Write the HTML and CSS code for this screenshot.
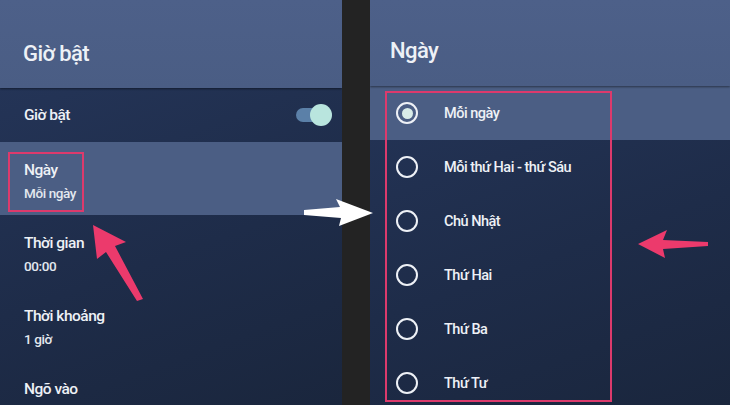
FILE: index.html
```html
<!DOCTYPE html>
<html lang="vi">
<head>
<meta charset="utf-8">
<title>Giờ bật</title>
<link rel="stylesheet" href="styles.css">
</head>
<body>
<div class="screen">
  <section class="panel left">
    <header class="head"><h1 class="head-title">Giờ bật</h1></header>
    <div class="list">
      <div class="row row-single">
        <span class="row-title">Giờ bật</span>
        <span class="toggle"><span class="track"></span><span class="thumb"></span></span>
      </div>
      <div class="row row-double selected">
        <span class="row-title">Ngày</span>
        <span class="row-sub">Mỗi ngày</span>
        <span class="mark mark-left"></span>
      </div>
      <div class="row row-double">
        <span class="row-title">Thời gian</span>
        <span class="row-sub">00:00</span>
      </div>
      <div class="row row-double">
        <span class="row-title">Thời khoảng</span>
        <span class="row-sub">1 giờ</span>
      </div>
      <div class="row row-double">
        <span class="row-title">Ngõ vào</span>
        <span class="row-sub">&nbsp;</span>
      </div>
    </div>
  </section>
  <div class="divider"></div>
  <section class="panel right">
    <header class="head head-right"><h1 class="head-title">Ngày</h1></header>
    <div class="list">
      <div class="opt selected"><span class="radio on"></span><span class="opt-label">Mỗi ngày</span></div>
      <div class="opt"><span class="radio"></span><span class="opt-label">Mỗi thứ Hai - thứ Sáu</span></div>
      <div class="opt"><span class="radio"></span><span class="opt-label">Chủ Nhật</span></div>
      <div class="opt"><span class="radio"></span><span class="opt-label">Thứ Hai</span></div>
      <div class="opt"><span class="radio"></span><span class="opt-label">Thứ Ba</span></div>
      <div class="opt"><span class="radio"></span><span class="opt-label">Thứ Tư</span></div>
    </div>
    <span class="mark mark-right"></span>
  </section>
  <svg class="arrows" width="730" height="405" viewBox="0 0 730 405" aria-hidden="true">
    <path d="M93 225 L126 242 L115 246 L143 299 L137 301 L106 252 L97 259 Z" fill="#ec3a6c"/>
    <path d="M638 244 L667 230 L663 240 L708 242 L708 246 L663 249 L665 258 Z" fill="#ec3a6c"/>
    <path d="M304 210 L340 207 L336 199 L373 213 L339 226 L341 218 L304 215 Z" fill="#ffffff"/>
  </svg>
</div>
</body>
</html>
```

FILE: styles.css
```css
* { box-sizing: border-box; }
html, body { margin: 0; padding: 0; }
body {
  width: 730px;
  height: 405px;
  overflow: hidden;
  background: #232323;
  font-family: Roboto, "Noto Sans", "DejaVu Sans", sans-serif;
  color: #eef1f6;
}
.screen {
  position: relative;
  display: flex;
  width: 730px;
  height: 405px;
}
.panel {
  position: relative;
  display: flex;
  flex-direction: column;
  background: linear-gradient(160deg, #26375c 0%, #1e2c49 60%, #1a263d 100%);
  overflow: hidden;
}
.left { width: 342px; }
.divider { width: 28px; background: #232323; }
.right { flex: 1; }

.head {
  height: 88px;
  flex: none;
  display: flex;
  align-items: center;
  padding: 18px 0 0 23px;
  background: linear-gradient(180deg, #4d6089 0%, #4a5d84 100%);
  box-shadow: 0 1px 2px rgba(0,0,0,0.45);
  position: relative;
  z-index: 1;
}
.head-right { height: 86px; padding: 14px 0 0 20px; }
.head-title {
  margin: 0;
  font-size: 22px;
  font-weight: 500;
  letter-spacing: -0.6px;
  color: #eef1f6;
}

.list { display: flex; flex-direction: column; }

.row {
  position: relative;
  padding-left: 24px;
  padding-right: 8px;
}
.row-single {
  height: 54px;
  display: flex;
  align-items: center;
  justify-content: space-between;
}
.row-double {
  height: 73px;
  display: flex;
  flex-direction: column;
  justify-content: flex-start;
  padding-top: 19px;
}
.row.selected { background: #4b5e84; }
.row-title {
  font-size: 15.5px;
  font-weight: 500;
  letter-spacing: -0.5px;
  line-height: 18px;
}
.row-sub {
  font-size: 13.5px;
  font-weight: 500;
  letter-spacing: -0.4px;
  line-height: 18px;
  margin-top: 5px;
  color: #e3e8ef;
}

.toggle {
  position: relative;
  width: 38px;
  height: 24px;
}
.track {
  position: absolute;
  left: 0;
  top: 5px;
  width: 26px;
  height: 14px;
  border-radius: 7px;
  background: #5b80a8;
}
.thumb {
  position: absolute;
  right: 2px;
  top: 1px;
  width: 22px;
  height: 22px;
  border-radius: 50%;
  background: #b9e5de;
}

.opt {
  height: 54px;
  display: flex;
  align-items: center;
  padding-left: 26px;
}
.opt.selected { background: #4b5e84; }
.radio {
  width: 22px;
  height: 22px;
  border-radius: 50%;
  border: 2.5px solid #eef1f6;
  flex: none;
  display: flex;
  align-items: center;
  justify-content: center;
}
.radio.on::after {
  content: "";
  width: 11px;
  height: 11px;
  border-radius: 50%;
  background: #d9ece8;
}
.opt-label {
  margin-left: 26px;
  font-size: 14.5px;
  font-weight: 500;
  letter-spacing: -0.5px;
}

.mark {
  position: absolute;
  border: 2px solid #dc3a6c;
  pointer-events: none;
}
.mark-left {
  left: 8px;
  top: 10px;
  width: 76px;
  height: 60px;
}
.mark-right {
  left: 15px;
  top: 91px;
  width: 227px;
  height: 311px;
}
.arrows {
  position: absolute;
  left: 0;
  top: 0;
  pointer-events: none;
}
```
